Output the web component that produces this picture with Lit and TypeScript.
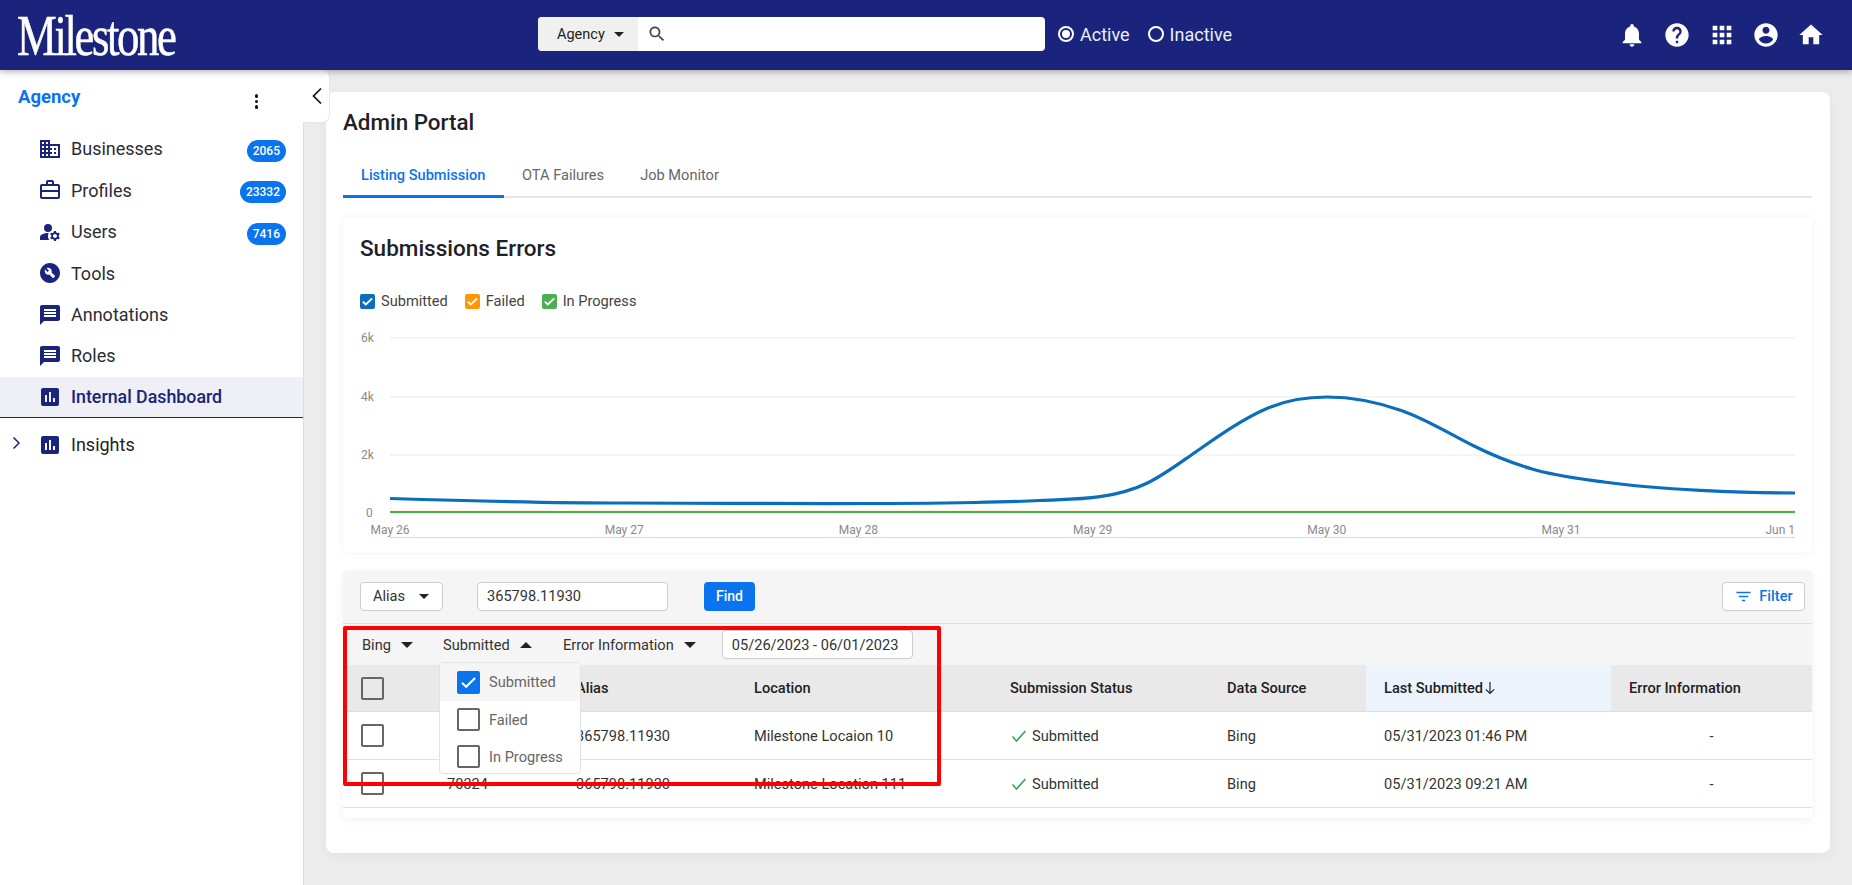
import { LitElement, html, css, svg } from "lit";
import { customElement } from "lit/decorators.js";

const P = {
  bell: "M12 22c1.1 0 2-.9 2-2h-4c0 1.1.89 2 2 2zm6-6v-5c0-3.07-1.64-5.64-4.5-6.32V4c0-.83-.67-1.5-1.5-1.5s-1.5.67-1.5 1.5v.68C7.63 5.36 6 7.92 6 11v5l-2 2v1h16v-1l-2-2z",
  help: "M12 2C6.48 2 2 6.48 2 12s4.48 10 10 10 10-4.48 10-10S17.52 2 12 2zm1 17h-2v-2h2v2zm2.07-7.75l-.9.92C13.45 12.9 13 13.5 13 15h-2v-.5c0-1.1.45-2.1 1.17-2.83l1.24-1.26c.37-.36.59-.86.59-1.41 0-1.1-.9-2-2-2s-2 .9-2 2H8c0-2.21 1.79-4 4-4s4 1.79 4 4c0 .88-.36 1.68-.93 2.25z",
  apps: "M4 8h4V4H4v4zm6 12h4v-4h-4v4zm-6 0h4v-4H4v4zm0-6h4v-4H4v4zm6 0h4v-4h-4v4zm6-10v4h4V4h-4zm-6 4h4V4h-4v4zm6 6h4v-4h-4v4zm0 6h4v-4h-4v4z",
  account: "M12 2C6.48 2 2 6.48 2 12s4.48 10 10 10 10-4.48 10-10S17.52 2 12 2zm0 3c1.66 0 3 1.34 3 3s-1.34 3-3 3-3-1.34-3-3 1.34-3 3-3zm0 14.2c-2.5 0-4.71-1.28-6-3.22.03-1.99 4-3.08 6-3.08 1.99 0 5.97 1.09 6 3.08-1.29 1.94-3.5 3.22-6 3.22z",
  home: "M10 20v-6h4v6h5v-8h3L12 3 2 12h3v8z",
  domain: "M12 7V3H2v18h20V7H12zM6 19H4v-2h2v2zm0-4H4v-2h2v2zm0-4H4V9h2v2zm0-4H4V5h2v2zm4 12H8v-2h2v2zm0-4H8v-2h2v2zm0-4H8V9h2v2zm0-4H8V5h2v2zm10 12h-8v-2h2v-2h-2v-2h2v-2h-2V9h8v10zm-2-8h-2v2h2v-2zm0 4h-2v2h2v-2z",
  work: "M14 6V4h-4v2h4zM4 8v4h16V8H4zm0 6v5h16v-5H4zm16-8c1.11 0 2 .89 2 2v11c0 1.11-.89 2-2 2H4c-1.11 0-2-.89-2-2l.01-11c0-1.11.88-2 1.99-2h4V4c0-1.11.89-2 2-2h4c1.11 0 2 .89 2 2v2h4z",
  users: "M6 8a4 4 0 1 0 8 0a4 4 0 1 0-8 0zM10.67 13.02C10.45 13.01 10.23 13 10 13c-2.42 0-4.68.67-6.61 1.82C2.51 15.34 2 16.32 2 17.35V20h9.26C10.47 18.87 10 17.49 10 16c0-1.07.25-2.07.67-2.98zM20.75 16c0-.22-.03-.42-.06-.63l1.14-1.01-1-1.73-1.45.49c-.32-.27-.68-.48-1.08-.63L18 11h-2l-.3 1.49c-.4.15-.76.36-1.08.63l-1.45-.49-1 1.73 1.14 1.01c-.03.21-.06.41-.06.63s.03.42.06.63l-1.14 1.01 1 1.73 1.45-.49c.32.27.68.48 1.08.63L16 21h2l.3-1.49c.4-.15.76-.36 1.08-.63l1.45.49 1-1.73-1.14-1.01c.03-.21.06-.41.06-.63zM17 18c-1.1 0-2-.9-2-2s.9-2 2-2 2 .9 2 2-.9 2-2 2z",
  tools: "M12 2C6.48 2 2 6.48 2 12s4.48 10 10 10 10-4.48 10-10S17.52 2 12 2zm4.9 13.49l-1.4 1.4c-.2.2-.51.2-.71 0l-3.41-3.41c-1.22.43-2.64.17-3.62-.81-1.11-1.11-1.3-2.79-.59-4.1l2.35 2.35 1.41-1.41-2.35-2.34c1.32-.71 2.99-.52 4.1.59.98.98 1.24 2.4.81 3.62l3.41 3.41c.2.19.2.51 0 .7z",
  chat: "M20 2H4c-1.1 0-2 .9-2 2v18l4-4h14c1.1 0 2-.9 2-2V4c0-1.1-.9-2-2-2zM18 14H6v-2h12v2zm0-3H6V9h12v2zm0-3H6V6h12v2z",
  chart: "M19 3H5c-1.1 0-2 .9-2 2v14c0 1.1.9 2 2 2h14c1.1 0 2-.9 2-2V5c0-1.1-.9-2-2-2zM9 17H7v-7h2v7zm4 0h-2V7h2v10zm4 0h-2v-4h2v4z",
  search: "M15.5 14h-.79l-.28-.27C15.41 12.59 16 11.11 16 9.5 16 5.91 13.09 3 9.5 3S3 5.91 3 9.5 5.91 16 9.5 16c1.61 0 3.09-.59 4.23-1.57l.27.28v.79l5 4.99L20.49 19l-4.99-5zm-6 0C7.01 14 5 11.99 5 9.5S7.01 5 9.5 5 14 7.01 14 9.5 11.99 14 9.5 14z",
  filter: "M10 18h4v-2h-4v2zM3 6v2h18V6H3zm3 7h12v-2H6v2z",
};

const icon = (d: string, cls = "") =>
  html`<svg class="ic ${cls}" viewBox="0 0 24 24"><path d=${d}></path></svg>`;

// Knots of the blue line: page x, page y, slope
const knots: [number, number, number][] = [
  [390, 498.5, 0.03], [624, 503, 0], [975, 502.5, -0.02], [1040, 500.5, -0.05], [1100, 496.7, -0.15],
  [1148, 482.7, -0.49], [1196, 451.7, -0.69], [1268, 408, -0.42], [1327, 397, 0],
  [1402, 410.7, 0.35], [1474, 446, 0.5], [1532, 469, 0.3], [1604, 482, 0.14], [1700, 490.3, 0.05], [1795, 493, 0],
];
function curve(k: [number, number, number][]) {
  const px = (x: number) => x - 343, py = (y: number) => y - 217;
  let d = `M${px(k[0][0])} ${py(k[0][1])}`;
  for (let i = 0; i < k.length - 1; i++) {
    const [x0, y0, m0] = k[i], [x1, y1, m1] = k[i + 1];
    const h = (x1 - x0) / 3;
    d += `C${px(x0 + h).toFixed(1)} ${py(y0 + m0 * h).toFixed(1)} ${px(x1 - h).toFixed(1)} ${py(y1 - m1 * h).toFixed(1)} ${px(x1)} ${py(y1).toFixed(1)}`;
  }
  return d;
}

const nav = [
  { i: P.domain, t: "Businesses", b: "2065" },
  { i: P.work, t: "Profiles", b: "23332" },
  { i: P.users, t: "Users", b: "7416" },
  { i: P.tools, t: "Tools" },
  { i: P.chat, t: "Annotations" },
  { i: P.chat, t: "Roles" },
];

const rows = [
  { id: "", alias: "365798.11930", loc: "Milestone Locaion 10", date: "05/31/2023 01:46 PM" },
  { id: "70324", alias: "365798.11930", loc: "Milestone Location 111", date: "05/31/2023 09:21 AM" },
];

@customElement("app-root")
export class AppRoot extends LitElement {
  static styles = css`
    :host { display: block; height: 885px; overflow: hidden; background: #ececec; font-family: Roboto, "Liberation Sans", sans-serif; color: #212529; position: relative; }
    * { box-sizing: border-box; }
    .ic { width: 24px; height: 24px; fill: currentColor; display: block; flex: none; }
    header { height: 70px; background: #1a247c; display: flex; align-items: center; position: relative; z-index: 3; box-shadow: 0 2px 6px rgba(0,0,0,.28); }
    .logo { width: 538px; padding: 1px 0 0 17px; font-family: "Liberation Serif", serif; color: #fff; font-size: 56px; line-height: 68px; letter-spacing: -3px; -webkit-text-stroke: .5px #fff; }
    .logo span { display: inline-block; transform: scaleX(.8); transform-origin: left center; }
    .search { width: 507px; height: 34px; margin-bottom: 2px; background: #fff; border-radius: 4px; display: flex; align-items: center; overflow: hidden; }
    .scope { width: 100px; height: 100%; background: #f0f0f0; display: flex; align-items: center; padding-left: 19px; font-size: 14.5px; color: #222; gap: 9px; }
    .search .ic { width: 20px; height: 20px; margin-left: 9px; color: #444; }
    .caret { width: 0; height: 0; border-left: 5px solid transparent; border-right: 5px solid transparent; border-top: 5px solid #222; flex: none; }
    .caret.up { border-top: 0; border-bottom: 5px solid #222; }
    .t2 .caret { border-left-width: 6px; border-right-width: 6px; border-top-width: 6px; }
    .t2 .caret.up { border-top-width: 0; border-bottom-width: 6px; }
    .radios { display: flex; align-items: center; margin-left: 13px; margin-bottom: 2px; color: #eceefa; font-size: 18px; }
    .radio { width: 16px; height: 16px; border-radius: 50%; border: 2px solid #fff; margin-right: 6px; display: flex; align-items: center; justify-content: center; }
    .radio.on::after { content: ""; width: 8px; height: 8px; border-radius: 50%; background: #fff; }
    .radios span + .radio { margin-left: 18px; }
    .tools { margin-left: auto; display: flex; gap: 16.7px; padding-right: 27px; color: #fff; }
    .tools .ic { width: 28px; height: 28px; }
    .body { display: flex; height: 815px; }
    aside { width: 304px; flex: none; background: #fff; border-right: 1px solid #dcdcdc; position: relative; padding-top: 58.3px; }
    .ag { position: absolute; left: 18px; top: 16px; font-weight: 700; font-size: 18.5px; color: #0a73ee; }
    .kebab { position: absolute; left: 254.5px; top: 24px; display: flex; flex-direction: column; gap: 2px; }
    .kebab i { width: 3.5px; height: 3.5px; border-radius: 50%; background: #111; display: block; }
    .toggle { position: absolute; left: 303px; top: 0; width: 27px; height: 53px; padding-left: 2px; background: #fff; border: 1px solid #e6e6e6; border-left: 0; border-top: 0; border-radius: 0 8px 8px 0; display: flex; align-items: center; justify-content: center; z-index: 2; }
    .row { height: 41.4px; display: flex; align-items: center; padding-left: 38px; color: #1a247c; position: relative; }
    .row label { margin-left: 9px; font-size: 18px; color: #2b2d33; }
    .badge { position: absolute; right: 17px; top: 11.5px; height: 22px; padding: 0 6px; border-radius: 11px; background: #0a73ee; color: #fff; font-size: 12px; font-weight: 500; display: flex; align-items: center; min-width: 38px; justify-content: center; }
    .row.sel { background: #efeff6; border-bottom: 1px solid #1a247c; }
    .row.sel label { color: #1a247c; font-weight: 500; font-size: 17.8px; }
    .row.ins { margin-top: 6px; }
    .row.ins label { color: #222; }
    .chev { position: absolute; left: 12px; top: 12px; }
    main { flex: 1; min-width: 0; padding: 22px 22px 0 22px; }
    .card { width: 1504px; height: 761px; background: #fff; border-radius: 8px; padding: 0 18px 0 17px; box-shadow: 0 4px 12px rgba(0,0,0,.04); position: relative; }
    h1 { margin: 0; font-size: 22.4px; font-weight: 500; line-height: 26px; padding-top: 17px; height: 61px; color: #1e2126; }
    .tabs { display: flex; height: 45px; border-bottom: 2px solid #e4e6ea; }
    .tab { font-size: 14.6px; padding: 12.5px 18px 0; height: 45px; color: #666; white-space: nowrap; }
    .tab.on { color: #0a73ee; font-weight: 500; border-bottom: 3px solid #0a73ee; width: 161px; }
    .chartp { height: 336px; margin-top: 19px; background: #fff; box-shadow: 0 0 10px rgba(0,0,0,.05); border-radius: 4px; position: relative; }
    .chartp h2 { margin: 0; font-size: 22.5px; font-weight: 500; line-height: 26px; padding: 18px 0 0 17px; height: 63px; color: #1e2126; }
    .legend { display: flex; align-items: center; height: 42px; padding-left: 17px; font-size: 14.6px; color: #444; }
    .lb { width: 15px; height: 15px; border-radius: 2px; margin-right: 6px; display: flex; }
    .lb svg { width: 15px; height: 15px; fill: none; stroke: #fff; stroke-width: 2; }
    .legend span { margin-right: 17px; }
    svg.chart { position: absolute; left: 0; top: 0; width: 1469px; height: 336px; display: block; }
    svg.chart text { font-family: Roboto, sans-serif; font-size: 12px; fill: #8a8a8a; }
    .tablep { margin-top: 18px; height: 247px; background: #fff; box-shadow: 0 2px 10px rgba(0,0,0,.06); border-radius: 4px; position: relative; }
    .t1 { height: 53px; background: #f5f5f5; border-bottom: 1px solid #ddd; display: flex; align-items: center; padding: 0 7px 2px 17px; }
    .sel-box { height: 29px; background: #fff; border: 1px solid #ccc; border-radius: 4px; font-size: 14.6px; display: flex; align-items: center; color: #333; }
    .alias { width: 83px; padding-left: 12px; gap: 14px; }
    .val { width: 191px; margin-left: 34px; padding-left: 9px; }
    .find { width: 51px; height: 29px; margin-left: 36px; background: #0a73ee; color: #fff; border-radius: 4px; display: flex; align-items: center; justify-content: center; font-size: 14px; font-weight: 500; }
    .filter { margin-left: auto; width: 83px; height: 29px; background: #fff; border: 1px solid #ccc; border-radius: 4px; color: #0a73ee; display: flex; align-items: center; justify-content: center; gap: 6px; font-size: 14.6px; font-weight: 500; }
    .filter .ic { width: 19px; height: 19px; }
    .t2 { height: 41px; background: #f5f5f5; display: flex; align-items: center; padding-left: 19px; font-size: 14.6px; color: #333; }
    .dd { display: flex; align-items: center; gap: 10px; }
    .dd.bing { width: 81px; }
    .dd.sub { width: 120px; }
    .date { width: 191px; margin-left: 26px; padding-left: 9px; justify-content: flex-start; }
    .grid { display: grid; grid-template-columns: 86px 129px 178px 256px 217px 157px 245px 201px; }
    .grid > div { padding-left: 18px; display: flex; align-items: center; font-size: 14.6px; color: #333; }
    .th { height: 47px; background: #e9e9e9; border-bottom: 1px solid #ddd; }
    .grid > div.th { font-weight: 500; color: #222; }
    .grid > div.sort { background: #edf3fd; gap: 1px; }
    .grid > div.dash { padding: 0; justify-content: center; }
    .td { height: 48px; border-bottom: 1px solid #dfe1e6; }
    .cb { width: 23px; height: 23px; border: 2px solid #666; border-radius: 2px; display: block; background: #fff; flex: none; }
    .th .cb { background: transparent; }
    .ok { width: 16px; height: 16px; margin-right: 5px; margin-left: 1px; fill: none; stroke: #2fa84f; stroke-width: 1.6; flex: none; }
    .menu { position: absolute; left: 96px; top: 91px; width: 142px; height: 112px; background: #fff; border: 1px solid #e2e2e2; border-radius: 4px; z-index: 2; font-size: 14.6px; color: #666; }
    .mi { display: flex; align-items: center; gap: 9px; padding-left: 17px; height: 37px; }
    .mi.on { background: #f5f5f5; height: 38px; }
    .mi .cb.ck { background: #0a73ee; border-color: #0a73ee; display: flex; align-items: center; justify-content: center; }
    .mi .cb svg { width: 21px; height: 21px; fill: none; stroke: #fff; stroke-width: 1.6; flex: none; }
    .red { position: absolute; left: 0; top: 55px; width: 598px; height: 160px; border: 4px solid #f00; border-radius: 2px; z-index: 3; pointer-events: none; }
  `;

  render() {
    const tick = html`<svg viewBox="0 0 16 16"><path d="M3 8.2l3.2 3L13 4.6"></path></svg>`;
    const months = ["May 26", "May 27", "May 28", "May 29", "May 30", "May 31"];
    return html`
      <header>
        <div class="logo"><span>Milestone</span></div>
        <div class="search">
          <div class="scope">Agency <i class="caret"></i></div>
          ${icon(P.search)}
        </div>
        <div class="radios">
          <i class="radio on"></i><span>Active</span>
          <i class="radio"></i><span>Inactive</span>
        </div>
        <div class="tools">${[P.bell, P.help, P.apps, P.account, P.home].map((d) => icon(d))}</div>
      </header>
      <div class="body">
        <aside>
          <div class="ag">Agency</div>
          <div class="kebab"><i></i><i></i><i></i></div>
          <div class="toggle"><svg width="12" height="18" viewBox="0 0 12 18" fill="none" stroke="#111" stroke-width="1.7"><path d="M10 1.5L2.5 9l7.5 7.5"></path></svg></div>
          ${nav.map((n) => html`<div class="row">${icon(n.i)}<label>${n.t}</label>${n.b ? html`<span class="badge">${n.b}</span>` : ""}</div>`)}
          <div class="row sel">${icon(P.chart)}<label>Internal Dashboard</label></div>
          <div class="row ins">
            <svg class="chev" width="9" height="14" viewBox="0 0 9 14" fill="none" stroke="#1a247c" stroke-width="1.5"><path d="M1.5 1.5L7 7l-5.5 5.5"></path></svg>
            ${icon(P.chart)}<label>Insights</label>
          </div>
        </aside>
        <main>
          <div class="card">
            <h1>Admin Portal</h1>
            <div class="tabs">
              <div class="tab on">Listing Submission</div>
              <div class="tab">OTA Failures</div>
              <div class="tab">Job Monitor</div>
            </div>
            <section class="chartp">
              <svg class="chart" viewBox="0 0 1469 336">
                ${[121, 180, 238].map((y) => svg`<line x1="47" x2="1452" y1=${y} y2=${y} stroke="#e9e9e9" stroke-width="1.2"></line>`)}
                ${[["6k", 125], ["4k", 184], ["2k", 242], ["0", 300]].map(([t, y]) => svg`<text x=${t === "0" ? 23 : 18} y=${y} text-anchor="start">${t}</text>`)}
                <line x1="47" x2="1452" y1="320.5" y2="320.5" stroke="#c9d8f0" stroke-width="1.2"></line>
                ${months.map((m, i) => svg`<text x=${47 + i * 234.2} y="317" text-anchor="middle">${m}</text>`)}
                <text x="1452" y="317" text-anchor="end">Jun 1</text>
                <line x1="47" x2="1452" y1="295" y2="295" stroke="#ff9800" stroke-width="2.6" opacity=".6"></line>
                <line x1="47" x2="1452" y1="295" y2="295" stroke="#4caf50" stroke-width="1.8"></line>
                <path d=${curve(knots)} fill="none" stroke="#0a6ebd" stroke-width="3.2"></path>
              </svg>
              <h2>Submissions Errors</h2>
              <div class="legend">
                <i class="lb" style="background:#0a6ebd">${tick}</i><span>Submitted</span>
                <i class="lb" style="background:#ff9800">${tick}</i><span>Failed</span>
                <i class="lb" style="background:#4caf50">${tick}</i><span>In Progress</span>
              </div>
            </section>
            <section class="tablep">
              <div class="t1">
                <div class="sel-box alias">Alias <i class="caret"></i></div>
                <div class="sel-box val">365798.11930</div>
                <div class="find">Find</div>
                <div class="filter">${icon(P.filter)}Filter</div>
              </div>
              <div class="t2">
                <div class="dd bing">Bing <i class="caret"></i></div>
                <div class="dd sub">Submitted <i class="caret up"></i></div>
                <div class="dd">Error Information <i class="caret"></i></div>
                <div class="sel-box date">05/26/2023 - 06/01/2023</div>
              </div>
              <div class="grid">
                <div class="th"><i class="cb"></i></div><div class="th"></div><div class="th">Alias</div><div class="th">Location</div>
                <div class="th">Submission Status</div><div class="th">Data Source</div>
                <div class="th sort">Last Submitted<svg width="12" height="14" viewBox="0 0 12 14" fill="none" stroke="#222" stroke-width="1.2"><path d="M6 1v11.5M1.8 8.3L6 12.5l4.2-4.2"></path></svg></div>
                <div class="th">Error Information</div>
                ${rows.map((r) => html`
                  <div class="td"><i class="cb"></i></div><div class="td">${r.id}</div><div class="td">${r.alias}</div><div class="td">${r.loc}</div>
                  <div class="td"><svg class="ok" viewBox="0 0 16 16"><path d="M1.5 8.5l4 4.5L14.5 3"></path></svg>Submitted</div>
                  <div class="td">Bing</div><div class="td">${r.date}</div><div class="td dash">-</div>
                `)}
              </div>
              <div class="menu">
                <div class="mi on"><i class="cb ck">${tick}</i>Submitted</div>
                <div class="mi"><i class="cb"></i>Failed</div>
                <div class="mi"><i class="cb"></i>In Progress</div>
              </div>
              <div class="red"></div>
            </section>
          </div>
        </main>
      </div>
    `;
  }
}
